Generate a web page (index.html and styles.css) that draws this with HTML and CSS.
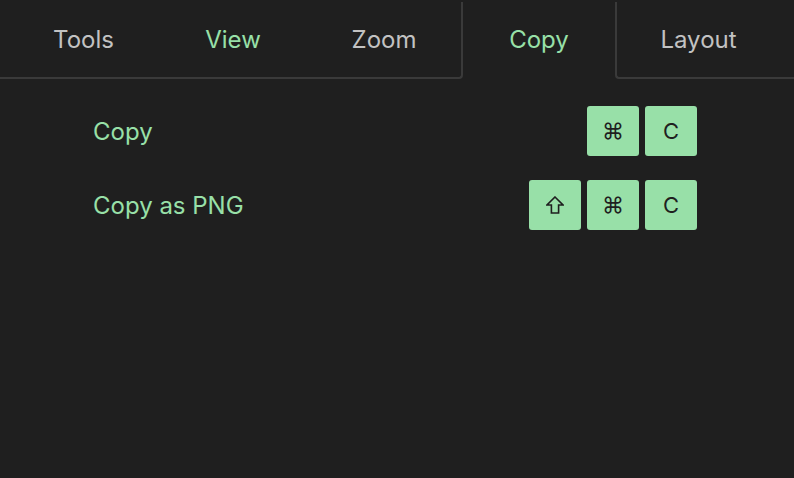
FILE: index.html
```html
<!DOCTYPE html>
<html>
<head>
<meta charset="utf-8">
<link rel="stylesheet" href="styles.css">
</head>
<body>
<nav class="tabs">
  <div class="tab-edge"></div>
  <div class="tab">Tools</div>
  <div class="tab tab-green">View</div>
  <div class="tab tab-before-active">Zoom</div>
  <div class="tab tab-active">Copy</div>
  <div class="tab tab-after-active">Layout</div>
  <div class="tab-fill"></div>
</nav>
<main class="shortcuts">
  <div class="row">
    <span class="label">Copy</span>
    <div class="keys">
      <kbd class="key">⌘</kbd>
      <kbd class="key">C</kbd>
    </div>
  </div>
  <div class="row">
    <span class="label">Copy as PNG</span>
    <div class="keys">
      <kbd class="key"><svg class="shift" viewBox="0 0 18 18" width="18" height="18"><path d="M9 1 L17 9 H12.6 V17 H5.4 V9 H1 Z" fill="none" stroke="#1f1f1f" stroke-width="1.6" stroke-linejoin="miter"/></svg></kbd>
      <kbd class="key">⌘</kbd>
      <kbd class="key">C</kbd>
    </div>
  </div>
</main>
</body>
</html>
```
FILE: styles.css
```css
* { box-sizing: border-box; }
html, body {
  margin: 0;
  padding: 0;
  background: #1f1f1f;
  width: 794px;
  height: 478px;
  overflow: hidden;
  font-family: Inter, "Noto Sans", sans-serif;
}
.tabs {
  display: grid;
  grid-template-columns: 8px 151px 148px 156px 152px 165px 1fr;
  padding-top: 2px;
  height: 79px;
}
.tab-edge,
.tab-fill {
  border-bottom: 2px solid #3a3a3a;
}
.tab {
  padding-bottom: 1px;
  display: flex;
  align-items: center;
  justify-content: center;
  font-size: 24px;
  color: #c2c2c2;
  border-bottom: 2px solid #3a3a3a;
}
.tab-green { color: #98e0a8; }
.tab-before-active {
  border-right: 2px solid #3a3a3a;
  border-bottom-right-radius: 4px;
}
.tab-active {
  color: #98e0a8;
  border-bottom-color: transparent;
}
.tab-after-active {
  border-left: 2px solid #3a3a3a;
  border-bottom-left-radius: 4px;
}
.shortcuts {
  padding: 27px 97px 0 93px;
  display: flex;
  flex-direction: column;
  gap: 24px;
}
.row {
  display: flex;
  justify-content: space-between;
  align-items: center;
  height: 50px;
}
.label {
  font-size: 24px;
  color: #98e0a8;
}
.keys {
  display: flex;
  gap: 6px;
}
.key {
  width: 52px;
  height: 50px;
  border-radius: 3px;
  background: #98e0a8;
  color: #1f1f1f;
  display: flex;
  align-items: center;
  justify-content: center;
  font-family: Inter, "DejaVu Sans", sans-serif;
  font-size: 22px;
}
```
